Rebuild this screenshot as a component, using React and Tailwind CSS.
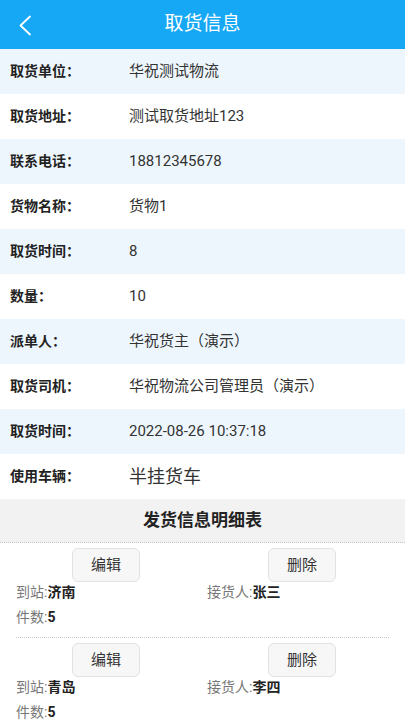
import React from "react";

const rows = [
  { label: "取货单位：", value: "华祝测试物流" },
  { label: "取货地址：", value: "测试取货地址123" },
  { label: "联系电话：", value: "18812345678" },
  { label: "货物名称：", value: "货物1" },
  { label: "取货时间：", value: "8" },
  { label: "数量：", value: "10" },
  { label: "派单人：", value: "华祝货主（演示）" },
  { label: "取货司机：", value: "华祝物流公司管理员（演示）" },
  { label: "取货时间：", value: "2022-08-26 10:37:18" },
  { label: "使用车辆：", value: "半挂货车", big: true },
];

const items = [
  { station: "济南", receiver: "张三", count: 5 },
  { station: "青岛", receiver: "李四", count: 5 },
];

const font = { fontFamily: 'Roboto, "Noto Sans CJK SC", sans-serif' };

const ActionButton = ({ children, className }) => (
  <button
    className={`h-[34px] w-[68px] rounded-md border border-[#e2e2e2] bg-[#f7f7f7] text-[15px] text-[#333] ${className}`}
  >
    {children}
  </button>
);

export default function App() {
  return (
    <div className="w-[405px] h-[720px] overflow-hidden bg-white" style={font}>
      {/* header */}
      <div className="h-[49px] bg-[#17a8f5] flex items-center relative">
        <svg
          className="absolute left-[18px] top-[15px]"
          width="14"
          height="21"
          viewBox="0 0 14 21"
          fill="none"
        >
          <path d="M12 1.5 L2.5 10.5 L12 19.5" stroke="white" strokeWidth="1.8" strokeLinecap="round" strokeLinejoin="round" />
        </svg>
        <div className="flex-1 text-center text-white text-[19px]">取货信息</div>
      </div>

      {/* info rows */}
      {rows.map((row, i) => (
        <div
          key={i}
          className={`h-[45px] flex items-center ${i % 2 === 0 ? "bg-[#eef6fd]" : "bg-white"}`}
        >
          <div className="w-[129px] shrink-0 pl-[10px] text-[14px] font-bold text-[#222]">{row.label}</div>
          <div className={`${row.big ? "text-[18px]" : "text-[15px]"} text-[#333]`}>{row.value}</div>
        </div>
      ))}

      {/* section title */}
      <div className="h-[44px] bg-[#f2f2f2] flex items-center justify-center border-b border-dotted border-[#c8c8c8] text-[17px] font-bold text-[#222]">
        发货信息明细表
      </div>

      {/* detail items */}
      {items.map((item, i) => (
        <div key={i} className="mx-[16px] pt-[5px] pb-[5px] border-b border-dotted border-[#c8c8c8] text-[14px]">
          <div className="flex">
            <div className="w-[191px]">
              <ActionButton className="ml-[56px]">编辑</ActionButton>
            </div>
            <div className="flex-1">
              <ActionButton className="ml-[61px]">删除</ActionButton>
            </div>
          </div>
          <div className="flex h-[20px] items-center">
            <div className="w-[191px] text-[#777]">
              到站:<span className="font-bold text-[#222]">{item.station}</span>
            </div>
            <div className="flex-1 text-[#777]">
              接货人:<span className="font-bold text-[#222]">{item.receiver}</span>
            </div>
          </div>
          <div className="h-[30px] flex items-center text-[#777]">
            件数:<span className="font-bold text-[#222]">{item.count}</span>
          </div>
        </div>
      ))}
    </div>
  );
}
